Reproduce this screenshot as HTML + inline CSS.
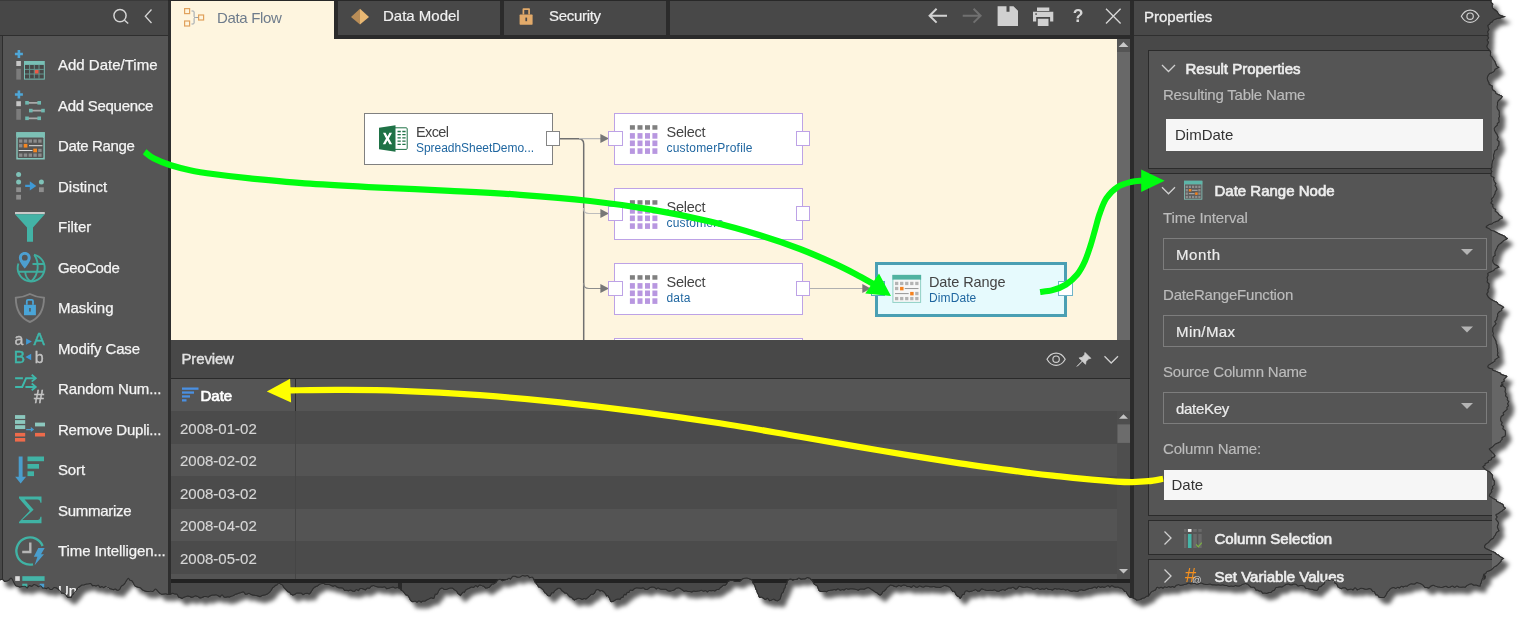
<!DOCTYPE html>
<html lang="en"><head><meta charset="utf-8"><title>Data Flow - Date Range</title>
<style>
html,body{margin:0;padding:0;background:#fff;}
body{width:1530px;height:623px;overflow:hidden;font-family:"Liberation Sans",sans-serif;font-size:15px;color:#e6e6e6;}
#shadow{position:absolute;left:0;top:0;width:1530px;height:623px;filter:drop-shadow(5px 6px 2.1px rgba(0,0,0,.63));}
#app{position:absolute;left:0;top:0;width:1530px;height:623px;background:#2e2e2e;overflow:hidden;}
.abs{position:absolute;}
.t{position:absolute;white-space:nowrap;line-height:20px;height:20px;}
svg{position:absolute;overflow:visible;}
/* left panel */
#lp-head{left:0;top:0;width:168px;height:34.800px;background:#474747;}
#lp-body{left:3px;top:36px;width:165px;height:600px;background:#555;}
#lp-edge{left:0;top:36px;width:1.6px;height:600px;background:#484848;}
.li{left:58px;color:#f4f4f4;-webkit-text-stroke:0.25px #f4f4f4;}
/* center */
#tabbar{left:171px;top:0;width:959px;height:39px;background:#2b2b2b;}
.tab{top:1px;height:34px;background:#484848;}
#canvas{left:171px;top:39px;width:946px;height:301px;background:#fef5df;overflow:hidden;}
#cscroll{left:1117px;top:39px;width:13px;height:301px;background:#555;}
.node{position:absolute;background:#fff;border:1.4px solid #bda2e6;box-sizing:border-box;}
.port{position:absolute;width:14.6px;height:14.6px;background:#fff;border:1.4px solid #bda2e6;box-sizing:border-box;}
.nt{color:#444;font-size:14.5px;}
.ns{color:#1f66a0;font-size:12px;}
/* preview */
#pv-head{left:171px;top:340px;width:959px;height:38px;background:#484848;}
#pv-th{left:171px;top:379px;width:959px;height:32px;background:#555;}
.row{left:171px;width:946px;}
/* props */
#pp{left:1134px;top:0;width:400px;height:623px;background:#484848;}
#pp-head{left:1134px;top:0;width:400px;height:35px;background:#484848;}
.sec{position:absolute;left:1148px;width:344px;background:#555;border:1px solid #2b2b2b;border-right:none;box-sizing:border-box;}
.lbl{color:#bcbcbc;left:1163px;-webkit-text-stroke:0.15px #bcbcbc;}
.sh{color:#ededed;font-weight:400;-webkit-text-stroke:0.65px #ededed;}
.inp{position:absolute;background:#f6f6f6;box-sizing:border-box;}
.dd{position:absolute;border:1px solid #7d7d7d;box-sizing:border-box;}
.ddt{color:#ececec;left:1176px;-webkit-text-stroke:0.2px #ececec;}

</style></head>
<body>
<div id="shadow"><div id="app" style="clip-path:path('M-20.0,-20.0 L-20.0,580.2 L0.0,580.2 L2.3,579.7 L4.5,582.0 L6.8,581.6 L8.9,580.7 L11.0,578.5 L12.1,579.8 L13.2,582.3 L14.2,584.1 L15.3,586.1 L17.6,586.8 L19.8,587.4 L22.1,587.0 L24.6,586.7 L27.2,588.4 L29.5,586.0 L31.7,586.9 L34.0,585.0 L36.1,585.6 L38.2,587.3 L40.4,586.3 L42.5,588.4 L44.4,588.4 L46.3,589.2 L48.2,588.1 L50.1,590.1 L52.0,590.1 L54.0,588.1 L55.9,588.2 L57.8,589.5 L59.5,591.1 L61.2,593.5 L62.9,593.5 L64.6,594.5 L66.3,596.4 L68.0,598.0 L71.4,598.0 L72.6,595.3 L73.8,594.2 L75.0,593.1 L76.2,591.7 L77.4,589.5 L78.7,587.9 L79.9,587.0 L82.1,585.4 L84.4,585.2 L86.7,584.4 L88.6,584.2 L90.5,583.9 L92.4,586.2 L94.3,585.9 L96.2,586.4 L98.1,585.6 L100.0,587.9 L102.0,587.0 L103.8,588.3 L105.7,586.8 L107.6,587.7 L109.5,589.1 L111.4,589.4 L113.3,590.3 L115.2,589.4 L117.1,590.8 L118.9,590.4 L120.3,589.2 L121.6,586.6 L123.0,585.7 L124.3,584.7 L125.6,583.0 L127.0,580.5 L128.3,578.8 L129.8,580.7 L131.4,580.9 L132.9,583.1 L134.4,586.1 L135.9,587.0 L138.1,587.8 L140.2,588.3 L142.3,590.3 L144.4,591.2 L146.6,592.0 L148.7,592.1 L150.8,591.6 L152.9,592.1 L155.5,589.5 L156.9,590.8 L158.3,592.4 L159.7,593.8 L161.8,594.8 L163.8,594.4 L165.8,594.3 L167.9,594.9 L169.9,595.1 L172.5,593.7 L175.0,594.6 L176.7,594.6 L178.4,597.4 L180.1,598.0 L182.0,599.0 L183.9,597.8 L185.9,597.1 L187.8,596.4 L189.7,597.0 L191.6,598.0 L193.5,597.2 L195.4,596.3 L197.7,597.0 L199.9,598.4 L202.2,598.0 L204.2,596.9 L206.3,597.1 L208.3,597.6 L210.4,596.2 L212.4,595.5 L214.3,595.6 L216.2,595.3 L218.1,596.2 L220.1,597.5 L222.0,595.3 L223.9,597.5 L225.8,597.8 L227.7,597.2 L229.6,597.5 L231.6,596.6 L233.5,596.1 L235.5,594.8 L237.4,594.3 L239.3,593.4 L241.3,592.9 L243.2,592.2 L245.2,594.7 L247.1,594.4 L249.1,593.8 L251.0,595.0 L252.9,595.4 L254.9,595.8 L257.4,596.2 L260.0,597.2 L262.1,596.0 L264.2,595.6 L266.4,594.9 L268.5,593.8 L270.0,592.6 L271.4,590.8 L272.9,588.2 L274.3,587.3 L275.8,585.7 L277.2,585.3 L278.7,583.6 L282.1,585.3 L283.5,587.8 L284.9,589.2 L286.3,590.7 L287.8,592.3 L289.2,592.5 L290.6,594.6 L292.7,595.5 L294.7,595.1 L296.8,593.6 L298.9,593.4 L301.0,593.4 L303.0,595.3 L305.1,594.0 L307.2,593.7 L309.3,594.6 L310.6,593.4 L312.0,591.2 L313.4,589.0 L314.7,587.7 L316.1,587.0 L318.0,586.3 L319.9,584.6 L321.8,584.1 L323.7,583.9 L325.6,585.0 L327.5,584.9 L329.3,585.1 L331.2,586.0 L333.1,586.7 L335.0,586.0 L336.9,587.5 L338.8,588.2 L340.7,588.2 L342.6,588.5 L344.5,591.1 L346.4,590.7 L348.4,591.2 L350.4,590.5 L352.4,591.5 L354.5,592.0 L356.5,590.0 L358.6,591.2 L360.3,588.9 L362.0,589.0 L365.4,590.4 L367.5,588.4 L369.6,588.8 L371.7,586.4 L373.8,586.1 L376.0,587.1 L378.1,587.4 L380.2,587.5 L382.3,587.8 L384.5,587.2 L386.6,589.2 L388.7,588.8 L390.8,588.1 L393.0,587.5 L395.1,588.6 L397.2,588.0 L399.3,588.4 L401.0,590.4 L402.7,591.5 L404.4,593.8 L405.9,595.5 L407.3,595.5 L408.7,597.5 L410.1,600.6 L411.5,601.8 L412.9,602.3 L415.0,601.6 L417.0,602.8 L419.0,601.3 L421.1,602.7 L423.1,601.4 L425.2,601.5 L427.2,600.2 L429.2,599.3 L431.3,598.2 L433.3,598.9 L434.5,598.3 L435.6,594.6 L436.7,595.0 L437.9,593.8 L439.0,591.3 L440.1,589.5 L442.1,588.5 L444.1,590.1 L446.1,590.1 L448.0,589.3 L450.0,588.6 L452.0,588.4 L453.4,589.4 L454.8,590.6 L456.3,591.6 L457.7,594.1 L459.1,594.8 L460.5,596.3 L461.9,594.2 L463.2,592.6 L464.6,592.7 L465.9,590.4 L467.3,589.5 L469.4,588.7 L471.6,587.4 L473.7,587.9 L475.8,586.1 L477.7,587.4 L479.7,585.4 L481.6,586.1 L483.6,586.7 L485.5,588.6 L487.5,588.3 L489.4,587.8 L490.8,586.2 L492.2,584.6 L493.6,584.5 L495.1,583.6 L496.5,582.6 L497.9,580.2 L500.2,579.8 L502.4,581.2 L504.7,580.2 L506.7,580.0 L508.8,578.8 L510.8,579.4 L512.8,576.8 L514.9,576.8 L517.4,577.8 L520.0,577.6 L522.5,576.0 L525.1,576.5 L527.4,576.0 L529.6,578.3 L531.9,577.6 L533.2,578.8 L534.4,582.1 L535.7,583.6 L537.0,585.3 L538.5,587.5 L540.0,587.7 L541.5,589.0 L542.9,590.3 L544.4,593.1 L545.9,593.8 L547.4,596.1 L548.9,596.3 L550.5,596.2 L552.0,593.2 L553.6,593.2 L555.2,591.0 L556.8,589.7 L558.4,588.7 L559.9,588.7 L561.5,590.9 L563.1,592.1 L564.7,593.5 L566.4,593.6 L568.0,595.6 L569.6,597.3 L571.2,597.6 L572.8,599.4 L574.4,600.6 L576.3,599.5 L578.3,598.8 L580.2,598.9 L582.1,600.1 L584.1,598.9 L586.0,599.5 L588.0,598.0 L589.7,596.6 L591.4,594.8 L593.1,594.8 L594.8,593.5 L596.5,590.2 L598.2,590.1 L599.9,591.4 L601.6,590.9 L603.3,591.9 L605.0,593.8 L606.3,596.5 L607.7,596.0 L609.0,598.2 L610.4,601.8 L611.8,602.3 L613.9,601.5 L616.0,600.0 L618.1,599.5 L620.3,599.7 L621.7,597.8 L623.2,597.7 L624.6,594.7 L626.1,595.4 L627.5,592.8 L629.0,592.9 L630.5,590.4 L632.6,590.9 L634.7,588.9 L636.8,588.2 L638.9,588.4 L641.1,588.7 L643.2,588.2 L645.3,590.0 L647.4,590.1 L649.7,588.2 L652.0,587.4 L654.2,587.8 L656.2,589.5 L658.1,588.3 L660.1,589.5 L662.0,589.7 L663.9,589.8 L665.9,589.7 L667.8,591.2 L670.0,591.6 L672.1,591.1 L674.2,590.5 L676.3,588.7 L678.3,588.2 L680.2,589.0 L682.2,590.4 L684.1,591.8 L686.0,591.2 L688.0,592.1 L689.9,592.1 L691.9,592.4 L693.8,591.4 L695.7,592.0 L697.7,591.4 L699.6,591.2 L701.6,590.8 L703.5,591.8 L705.4,591.0 L707.3,592.5 L709.3,591.0 L711.2,591.3 L713.1,591.0 L715.0,591.6 L716.9,590.0 L718.8,590.1 L720.4,588.3 L722.0,587.0 L723.5,585.7 L725.1,585.8 L726.7,584.6 L728.3,581.8 L729.9,581.0 L732.2,580.8 L734.5,581.6 L736.9,581.9 L739.2,581.9 L740.9,580.9 L742.6,579.3 L744.7,578.8 L746.8,578.4 L749.0,579.1 L751.1,579.9 L751.9,580.6 L752.8,583.6 L753.6,584.2 L754.5,586.1 L755.3,589.3 L756.2,590.2 L757.0,593.3 L757.9,594.4 L758.7,597.1 L759.6,598.0 L761.6,597.6 L763.6,598.9 L765.5,600.0 L767.5,598.7 L769.5,601.3 L771.5,600.6 L773.6,599.6 L775.7,600.9 L777.9,601.2 L780.0,599.7 L780.8,598.8 L781.5,595.7 L782.3,593.4 L783.1,592.7 L783.9,591.9 L784.6,588.6 L785.4,588.3 L786.2,584.6 L787.0,584.8 L787.7,580.8 L788.5,580.2 L790.5,579.4 L792.6,580.5 L794.6,579.9 L796.7,579.9 L798.7,578.5 L800.9,579.4 L803.1,579.2 L805.3,579.2 L807.5,578.0 L809.7,578.8 L811.0,580.1 L812.2,580.9 L813.4,583.8 L814.6,585.1 L815.9,585.6 L817.1,586.6 L818.3,590.3 L819.6,591.4 L820.8,592.1 L822.7,592.0 L824.6,591.8 L826.5,592.3 L828.4,591.1 L830.3,590.8 L832.3,590.4 L834.2,590.0 L836.1,590.4 L838.1,589.2 L840.2,590.7 L842.2,590.1 L844.2,590.4 L846.3,589.1 L848.3,589.8 L850.3,589.2 L852.4,589.2 L854.4,589.5 L856.5,590.1 L858.4,590.7 L860.3,589.5 L862.3,589.4 L864.2,589.7 L866.2,588.7 L868.1,587.9 L870.1,589.0 L871.8,590.2 L873.5,591.2 L875.2,592.6 L876.9,593.2 L878.6,594.9 L880.3,595.5 L881.7,594.7 L883.2,592.0 L884.6,591.3 L886.1,589.8 L887.5,587.8 L889.0,586.8 L890.5,585.6 L892.6,586.0 L894.7,587.0 L896.8,587.2 L898.9,585.8 L901.1,586.8 L903.2,585.5 L905.3,585.8 L907.4,587.0 L909.5,587.0 L911.5,587.9 L913.6,586.0 L915.6,587.5 L917.6,587.8 L919.7,586.3 L921.7,587.2 L923.8,587.6 L925.8,586.4 L927.8,586.7 L929.9,587.2 L931.9,587.3 L934.0,587.0 L936.0,587.7 L938.0,587.8 L940.1,588.0 L942.1,587.1 L944.1,586.1 L946.2,586.3 L948.2,587.0 L949.7,587.8 L951.2,590.1 L952.7,592.1 L954.2,591.8 L955.7,594.9 L957.1,596.5 L958.6,597.0 L960.1,598.9 L961.5,597.4 L962.8,595.0 L964.2,594.9 L965.6,591.6 L966.9,591.2 L969.0,592.3 L971.2,591.7 L973.3,591.1 L975.4,590.1 L977.5,591.5 L979.7,591.5 L981.8,589.3 L983.9,590.1 L986.0,590.8 L988.2,591.1 L990.3,590.7 L992.4,590.9 L994.5,590.3 L996.7,591.6 L998.8,591.8 L1000.9,590.7 L1002.9,590.1 L1005.0,590.8 L1007.0,589.5 L1009.1,588.5 L1011.1,588.6 L1013.1,587.8 L1015.2,589.4 L1017.2,589.2 L1019.3,586.7 L1021.3,587.3 L1023.2,587.9 L1025.2,587.7 L1027.1,587.3 L1029.1,588.1 L1031.0,588.3 L1032.9,589.8 L1034.9,589.5 L1037.4,588.6 L1040.0,590.1 L1042.1,589.2 L1044.2,589.8 L1046.4,588.7 L1048.5,590.1 L1050.6,590.0 L1052.7,590.5 L1054.9,588.9 L1057.0,589.5 L1059.1,589.2 L1061.2,590.1 L1063.4,589.6 L1065.5,590.6 L1067.6,590.0 L1069.7,591.3 L1071.9,591.8 L1074.0,591.2 L1075.9,591.8 L1077.8,591.9 L1079.6,590.6 L1081.5,590.2 L1083.4,590.9 L1085.3,590.4 L1087.2,589.7 L1089.1,589.0 L1091.0,589.0 L1092.9,588.2 L1094.8,587.4 L1096.6,588.8 L1098.5,586.8 L1100.4,588.0 L1102.3,587.2 L1104.2,587.9 L1106.1,587.1 L1108.0,586.1 L1109.9,587.7 L1111.9,586.0 L1113.8,587.2 L1115.7,587.8 L1117.7,587.5 L1119.6,588.3 L1121.6,588.7 L1123.0,589.9 L1124.4,591.9 L1125.8,592.1 L1127.2,594.8 L1128.6,596.4 L1130.1,598.0 L1132.2,598.1 L1134.3,598.9 L1136.4,600.4 L1138.6,600.2 L1140.6,599.9 L1142.6,598.7 L1144.7,598.3 L1146.7,596.8 L1148.8,596.3 L1150.2,594.2 L1151.6,592.3 L1153.0,591.5 L1154.4,590.9 L1155.8,590.2 L1157.2,587.8 L1159.2,588.6 L1161.1,587.7 L1163.0,588.7 L1164.9,587.3 L1166.8,588.1 L1168.7,587.0 L1170.6,587.7 L1172.5,587.0 L1174.5,587.9 L1176.5,585.8 L1178.5,585.1 L1180.5,585.9 L1182.5,585.4 L1184.4,585.0 L1186.6,584.4 L1188.7,583.4 L1190.8,584.2 L1192.9,584.1 L1195.1,583.9 L1197.2,584.8 L1199.3,584.0 L1201.4,583.6 L1203.6,584.4 L1205.7,585.0 L1207.8,584.9 L1209.9,584.4 L1212.0,585.3 L1214.2,585.2 L1216.3,585.5 L1218.4,585.3 L1220.5,585.7 L1222.7,585.3 L1224.8,585.9 L1226.9,586.1 L1229.0,586.9 L1231.2,586.6 L1233.3,586.9 L1235.4,586.1 L1237.4,586.5 L1239.4,586.4 L1241.4,585.6 L1243.3,584.6 L1245.3,584.1 L1247.3,584.4 L1249.0,586.0 L1250.7,587.5 L1252.4,587.7 L1254.1,587.7 L1255.8,590.5 L1257.5,590.6 L1259.2,591.6 L1260.9,591.6 L1262.6,593.8 L1264.7,593.6 L1266.8,594.0 L1269.0,593.0 L1271.1,592.9 L1272.8,591.3 L1274.5,590.8 L1276.2,587.9 L1277.9,587.8 L1279.9,587.2 L1282.0,587.6 L1284.0,586.3 L1286.0,584.9 L1288.1,584.4 L1290.1,585.2 L1292.1,585.2 L1294.0,584.4 L1296.0,584.7 L1298.0,586.6 L1300.0,585.9 L1301.9,586.0 L1303.8,586.3 L1305.6,588.9 L1307.5,588.9 L1309.8,589.5 L1312.0,589.7 L1314.3,590.6 L1316.5,591.1 L1318.0,590.2 L1319.5,587.3 L1321.0,587.0 L1322.5,585.6 L1324.1,584.4 L1325.6,581.5 L1327.1,580.6 L1329.7,580.9 L1332.3,580.6 L1333.7,581.4 L1335.0,583.7 L1336.4,584.3 L1337.7,587.3 L1339.1,588.1 L1341.1,589.3 L1343.1,588.2 L1345.1,588.2 L1347.1,590.3 L1349.1,589.9 L1351.1,589.6 L1353.1,590.4 L1355.1,588.3 L1357.1,590.4 L1359.1,589.6 L1361.1,588.7 L1363.1,588.9 L1365.1,589.7 L1367.1,589.7 L1369.2,588.9 L1370.8,589.4 L1372.4,591.7 L1374.0,591.9 L1375.6,595.2 L1377.2,595.2 L1378.8,597.6 L1380.4,597.9 L1384.2,597.9 L1385.4,596.8 L1386.6,594.8 L1387.8,592.3 L1389.0,591.3 L1390.2,589.6 L1392.1,588.3 L1394.0,588.0 L1395.8,589.0 L1397.7,587.8 L1399.6,588.4 L1401.5,586.7 L1403.4,587.5 L1405.2,586.6 L1407.2,586.7 L1409.1,585.3 L1411.0,584.3 L1413.0,584.6 L1414.9,584.4 L1416.8,583.0 L1418.8,583.6 L1420.8,584.3 L1422.8,585.5 L1424.8,588.1 L1426.9,588.0 L1429.0,588.5 L1431.1,586.5 L1433.2,585.7 L1435.3,586.6 L1437.4,587.2 L1439.6,587.6 L1441.7,588.1 L1443.9,587.3 L1446.0,586.7 L1448.2,588.1 L1450.3,587.4 L1452.5,586.5 L1454.6,588.0 L1456.8,586.5 L1458.9,587.4 L1461.1,587.7 L1463.2,587.4 L1465.4,587.8 L1467.4,585.8 L1469.4,584.8 L1471.4,584.3 L1473.6,585.7 L1475.9,585.4 L1478.1,586.2 L1480.4,586.6 L1481.0,583.9 L1481.6,583.1 L1482.3,580.2 L1482.9,578.8 L1483.5,577.6 L1484.2,574.6 L1483.4,580.3 L1485.4,578.5 L1486.1,576.6 L1484.7,574.8 L1486.6,572.9 L1487.2,571.9 L1490.7,570.8 L1492.0,569.7 L1493.5,568.6 L1494.2,567.6 L1496.3,566.5 L1498.1,564.9 L1499.8,563.3 L1501.3,561.7 L1501.8,560.1 L1504.3,558.5 L1502.1,557.3 L1500.0,556.0 L1498.8,554.8 L1496.3,553.6 L1495.6,552.6 L1493.6,551.5 L1490.8,550.4 L1488.6,549.3 L1486.3,548.3 L1485.0,547.2 L1485.2,545.7 L1486.5,544.3 L1488.9,542.8 L1489.8,541.4 L1491.3,539.9 L1493.9,538.4 L1494.3,537.0 L1495.7,535.5 L1496.2,534.0 L1497.0,532.6 L1499.5,531.1 L1498.6,529.1 L1497.8,527.1 L1498.3,525.1 L1499.1,523.1 L1497.9,521.1 L1496.3,519.1 L1497.7,517.1 L1496.3,515.0 L1498.6,513.9 L1500.1,512.7 L1502.1,511.5 L1503.4,510.3 L1505.0,509.2 L1505.9,508.0 L1503.9,506.5 L1503.9,505.1 L1502.2,503.6 L1499.5,502.2 L1497.0,501.1 L1496.9,500.0 L1495.2,499.0 L1493.0,497.9 L1491.5,496.8 L1489.8,495.8 L1490.5,493.9 L1492.3,492.1 L1491.9,490.2 L1493.4,488.4 L1492.9,486.6 L1494.9,484.7 L1494.7,482.9 L1495.0,481.0 L1493.3,479.0 L1492.9,477.1 L1493.1,475.2 L1491.4,473.2 L1490.4,472.0 L1488.2,470.7 L1485.9,469.4 L1484.6,468.1 L1483.4,466.8 L1485.4,465.4 L1485.5,464.0 L1488.9,462.6 L1488.8,461.2 L1491.9,459.8 L1491.9,458.4 L1495.0,457.0 L1495.3,455.6 L1494.5,454.0 L1492.6,452.3 L1491.3,450.7 L1489.8,449.1 L1491.8,448.0 L1493.3,446.8 L1494.2,445.7 L1495.5,444.5 L1497.9,443.4 L1500.6,442.2 L1501.1,441.1 L1502.6,439.5 L1502.4,437.9 L1505.5,436.3 L1505.9,434.7 L1505.9,432.7 L1505.7,430.6 L1503.3,428.6 L1504.1,426.6 L1501.8,424.6 L1502.7,422.6 L1501.1,420.6 L1501.1,418.6 L1501.6,416.7 L1504.3,414.9 L1503.6,413.1 L1505.7,411.2 L1507.7,409.4 L1507.3,407.6 L1509.1,405.7 L1508.0,403.7 L1509.3,401.7 L1507.7,399.7 L1508.1,397.7 L1506.0,395.7 L1506.4,393.7 L1505.5,391.7 L1505.9,389.6 L1505.5,387.5 L1503.2,385.4 L1503.3,383.2 L1501.1,386.1 L1503.3,384.5 L1502.1,382.9 L1504.9,381.3 L1504.2,379.7 L1505.8,378.1 L1507.5,376.5 L1506.4,375.5 L1502.8,374.6 L1500.9,373.6 L1500.3,372.6 L1497.9,371.7 L1495.7,370.7 L1492.9,369.7 L1493.3,368.8 L1489.3,367.8 L1488.2,366.8 L1488.7,365.5 L1491.1,364.1 L1493.3,362.7 L1495.3,361.3 L1495.3,360.0 L1497.5,358.6 L1499.5,357.2 L1497.8,355.1 L1498.3,352.9 L1497.9,350.8 L1498.1,348.8 L1497.5,346.9 L1497.4,345.0 L1496.6,343.1 L1496.4,341.1 L1495.5,339.2 L1494.4,337.3 L1493.3,335.3 L1493.9,333.4 L1493.1,331.5 L1493.2,329.5 L1493.3,327.6 L1494.9,325.7 L1496.6,323.8 L1495.3,321.8 L1497.1,319.9 L1497.3,318.0 L1498.2,316.0 L1498.0,314.1 L1499.5,312.2 L1502.2,310.6 L1502.1,309.0 L1504.3,307.4 L1503.0,306.2 L1500.9,305.0 L1498.3,303.7 L1497.9,302.5 L1496.4,301.5 L1493.8,300.4 L1491.9,299.3 L1490.3,298.3 L1489.0,297.2 L1488.2,296.1 L1487.2,294.1 L1488.6,292.0 L1488.3,290.0 L1489.4,287.9 L1489.3,285.9 L1489.5,283.8 L1487.6,281.8 L1488.1,279.7 L1487.6,277.7 L1488.5,275.6 L1488.2,273.6 L1490.4,272.5 L1492.7,271.5 L1494.4,270.4 L1495.1,269.3 L1497.4,268.2 L1499.5,267.2 L1497.9,265.6 L1495.0,264.0 L1493.5,262.3 L1493.1,260.7 L1493.5,259.0 L1493.5,257.2 L1495.8,255.4 L1495.3,253.6 L1495.6,251.8 L1496.5,250.0 L1497.4,248.2 L1498.1,246.4 L1499.5,244.7 L1501.3,243.4 L1502.9,242.1 L1504.2,240.8 L1506.8,239.5 L1508.2,238.2 L1505.7,237.3 L1505.8,236.4 L1504.2,235.5 L1501.9,234.6 L1499.5,233.6 L1498.0,232.7 L1496.3,231.8 L1494.5,230.8 L1491.3,229.9 L1490.3,228.9 L1488.6,227.9 L1486.6,227.0 L1487.6,226.0 L1489.2,225.0 L1492.7,224.1 L1493.4,223.1 L1495.6,222.2 L1498.4,221.2 L1499.4,220.2 L1500.4,219.3 L1502.7,218.3 L1502.3,216.4 L1499.2,214.4 L1497.9,212.5 L1495.6,210.9 L1496.2,209.3 L1493.7,207.7 L1493.1,206.1 L1493.4,204.5 L1491.4,202.9 L1492.7,201.0 L1491.9,199.2 L1493.8,197.3 L1494.5,195.5 L1495.5,193.7 L1495.7,191.8 L1497.2,190.0 L1497.1,187.8 L1495.5,185.5 L1496.3,183.3 L1494.8,181.4 L1494.0,179.4 L1494.5,177.5 L1491.4,175.6 L1491.4,173.6 L1492.4,171.5 L1491.2,169.3 L1492.4,167.2 L1492.2,165.1 L1492.7,162.9 L1493.1,160.8 L1494.3,158.8 L1494.1,156.9 L1494.0,155.0 L1494.7,153.1 L1495.2,151.1 L1497.8,149.2 L1497.9,147.3 L1499.3,145.3 L1499.3,143.4 L1499.5,141.5 L1497.6,139.6 L1498.5,137.8 L1498.1,136.0 L1497.3,134.1 L1496.0,132.3 L1495.0,130.5 L1494.7,128.6 L1495.8,127.0 L1497.8,125.4 L1497.7,123.8 L1499.5,122.2 L1499.4,120.3 L1499.1,118.3 L1500.1,116.4 L1499.6,114.5 L1499.8,112.5 L1499.4,110.6 L1497.9,108.7 L1497.5,106.8 L1498.0,104.8 L1497.9,102.9 L1498.5,101.3 L1500.1,99.7 L1501.9,98.1 L1502.7,96.5 L1501.6,95.4 L1498.6,94.3 L1496.3,93.2 L1495.9,91.4 L1493.0,89.6 L1492.5,87.7 L1492.9,85.9 L1489.6,84.1 L1489.2,82.2 L1488.2,80.4 L1487.7,78.2 L1488.3,76.1 L1489.8,74.0 L1492.4,72.9 L1494.3,71.8 L1495.0,70.7 L1495.3,69.7 L1497.4,68.6 L1499.5,67.5 L1497.2,65.9 L1496.3,64.3 L1495.8,62.5 L1494.9,60.7 L1493.4,58.9 L1492.8,57.2 L1490.8,55.4 L1491.0,53.6 L1491.1,51.8 L1489.8,50.0 L1488.2,48.2 L1487.2,46.2 L1488.3,44.1 L1488.8,42.1 L1487.6,40.0 L1489.2,38.0 L1488.1,36.0 L1488.7,33.9 L1488.0,31.9 L1489.5,29.8 L1488.9,27.8 L1488.2,25.7 L1490.0,24.4 L1490.6,23.2 L1492.9,21.9 L1493.5,20.6 L1496.3,19.3 L1498.4,18.8 L1501.1,18.3 L1501.3,17.7 L1504.0,17.2 L1505.9,16.7 L1503.7,16.0 L1501.4,15.2 L1499.5,14.5 L1498.4,12.9 L1497.4,11.3 L1495.2,9.6 L1493.1,8.0 L1492.6,6.0 L1493.4,4.0 L1491.4,2.0 L1491.4,0.0 L1491.4,-20.0 Z')">
<div class="abs" id="lp-head"></div>
<div class="abs" id="lp-edge"></div>
<div class="abs" id="lp-body"></div>
<svg id="lp-icons" width="168" height="623" style="left:0;top:0" viewBox="0 0 168 623">
  <!-- search + collapse -->
  <circle cx="120" cy="15.600" r="6.100" fill="none" stroke="#d4d4d4" stroke-width="1.500"/>
  <path d="M124.500 20.200 L128.200 23.500" stroke="#d4d4d4" stroke-width="1.500" fill="none"/>
  <path d="M151.5 9.5 L145.3 16.3 L151.5 23" stroke="#d4d4d4" stroke-width="1.3" fill="none"/>

  <!-- Add Date/Time -->
  <path d="M17.600 50 h2.600 v2.700 h2.700 v2.600 h-2.700 v2.700 h-2.600 v-2.700 h-2.700 v-2.600 h2.700z" fill="#4fa6d6"/>
  <rect x="16.3" y="61" width="4.6" height="5" fill="#c6c6c6"/>
  <rect x="16.3" y="68.8" width="4.6" height="10.8" fill="#7c7c7c"/>
  <rect x="24" y="61" width="20.800" height="18.600" fill="#78bfb5"/>
  <rect x="25" y="64.900" width="18.800" height="13.700" fill="#474747"/>
  <path d="M29.600 64.900v13.700 M34.300 64.900v13.700 M39 64.900v13.700 M25 69.400h18.800 M25 74h18.800" stroke="#64958e" stroke-width="1" fill="none"/>
  <rect x="34.900" y="70" width="3.600" height="3.500" fill="#ea5a47"/>

  <!-- Add Sequence -->
  <path d="M17.600 90.500 h2.600 v2.700 h2.700 v2.600 h-2.700 v2.700 h-2.600 v-2.700 h-2.700 v-2.600 h2.700z" fill="#4fa6d6"/>
  <rect x="16.3" y="101.2" width="4.6" height="5" fill="#c6c6c6"/>
  <rect x="16.3" y="109" width="4.6" height="10.8" fill="#7c7c7c"/>
  <path d="M27 102.800h12 M31 110.600h12 M27 118.300h12" stroke="#a9a9a9" stroke-width="1.700" fill="none"/>
  <g fill="#6fb8b0"><rect x="25.2" y="101" width="3.6" height="3.6"/><rect x="37.4" y="101" width="3.6" height="3.6"/>
  <rect x="29" y="108.8" width="3.6" height="3.6"/><rect x="41.2" y="108.8" width="3.6" height="3.6"/>
  <rect x="25.2" y="116.5" width="3.6" height="3.6"/><rect x="37.4" y="116.5" width="3.6" height="3.6"/></g>

  <!-- Date Range -->
  <rect x="16.3" y="132.2" width="28.500" height="27.300" fill="#86c5bb"/>
  <rect x="16.3" y="132.2" width="28.500" height="4.600" fill="#7cc0b5"/>
  <rect x="17.700" y="137.500" width="25.700" height="20.600" rx="0.800" fill="#555555"/>
  <g fill="#8b8b8b"><rect x="19.00" y="139.40" width="3.400" height="3.300"/><rect x="23.80" y="139.40" width="3.400" height="3.300"/><rect x="28.60" y="139.40" width="3.400" height="3.300"/><rect x="33.40" y="139.40" width="3.400" height="3.300"/><rect x="38.20" y="139.40" width="3.400" height="3.300"/><rect x="19.00" y="144.10" width="3.400" height="3.300"/><rect x="38.20" y="148.80" width="3.400" height="3.300"/><rect x="19.00" y="153.50" width="3.400" height="3.300"/><rect x="23.80" y="153.50" width="3.400" height="3.300"/><rect x="28.60" y="153.50" width="3.400" height="3.300"/><rect x="33.40" y="153.50" width="3.400" height="3.300"/><rect x="38.20" y="153.50" width="3.400" height="3.300"/></g>
  <rect x="23.70" y="143.90" width="3.700" height="3.700" fill="#f5861f"/><rect x="33.30" y="148.60" width="3.700" height="3.700" fill="#f5861f"/>
  <path d="M29 145.700H42.400 M18.700 150.500H32.500" stroke="#dedede" stroke-width="1"/>

  <!-- Distinct -->
  <g fill="#7fc2b8"><circle cx="18.600" cy="174.600" r="2.500"/><circle cx="18.600" cy="182.100" r="2.500"/><circle cx="41.400" cy="182.100" r="2.500"/></g>
  <g fill="#8e8e8e"><rect x="16.200" y="187.300" width="4.800" height="4.800"/><rect x="16.200" y="194.800" width="4.800" height="4.800"/><rect x="39" y="187.300" width="4.800" height="4.800"/></g>
  <path d="M25.200 185.900h7" stroke="#3f9ad6" stroke-width="2.400" fill="none"/>
  <path d="M29.800 181.300 L36.300 185.900 L29.800 190.500z" fill="#3f9ad6"/>

  <!-- Filter -->
  <rect x="15" y="212" width="29.8" height="2.2" fill="#c9c9c9"/>
  <path d="M15 214.2 H44.8 L33 227.5 V241.8 H27 V227.5z" fill="#43b3a6"/>

  <!-- GeoCode -->
  <g fill="none" stroke="#3fae9f" stroke-width="1.9">
    <path d="M34 254.700 A13.500 13.500 0 1 1 18.400 263.500"/>
    <path d="M34.300 255 C39.300 262 39.300 274 31.200 281.400 M25.200 272 C25.500 277 28 280 31.200 281.400 M32.500 264 H44 M18.500 271.800 H44.300"/>
  </g>
  <path d="M24.800 251.900 c-3.400 0 -5.900 2.600 -5.900 5.900 c0 4.200 5.900 10.800 5.900 10.800 s5.900 -6.600 5.900 -10.800 c0 -3.300 -2.500 -5.900 -5.900 -5.900z M24.800 254.800 a2.900 2.900 0 1 1 0 5.800 a2.900 2.900 0 1 1 0 -5.800z" fill="#4d9fd0" fill-rule="evenodd"/>

  <!-- Masking -->
  <path d="M29.9 294 C25 296.5 20 297.6 15.8 297.8 C15.8 309 19 317.5 29.9 322 C40.800 317.500 44 309 44 297.800 C39.800 297.600 34.800 296.500 29.900 294z" fill="none" stroke="#828282" stroke-width="1.9"/>
  <rect x="24" y="304.8" width="11.9" height="10.4" fill="#4aa5d8"/>
  <path d="M26.800 304.800 v-3.700 q0 -1.200 1.200 -1.200 h3.800 q1.200 0 1.200 1.200 v3.700" fill="none" stroke="#4aa5d8" stroke-width="1.800"/>
  <rect x="29.2" y="308" width="1.5" height="3.6" fill="#555"/>

  <!-- Modify Case -->
  <g font-family="Liberation Sans, sans-serif">
  <text x="14.600" y="345.300" font-size="16" fill="#c2c2c2" stroke="#c2c2c2" stroke-width="0.300">a</text>
  <text x="33.400" y="345.400" font-size="17" fill="#3fb8ab" stroke="#3fb8ab" stroke-width="0.450">A</text>
  <text x="13.700" y="362.800" font-size="17" fill="#3fb8ab" stroke="#3fb8ab" stroke-width="0.450">B</text>
  <text x="34.700" y="362.800" font-size="16" fill="#c2c2c2" stroke="#c2c2c2" stroke-width="0.300">b</text>
  </g>
  <path d="M26.100 338.400 L31.900 341.600 L26.100 344.800z M31.200 353.800 L25.400 357 L31.200 360.200z" fill="#3f9ad6"/>

  <!-- Random Number -->
  <g fill="none" stroke="#3fb8ab" stroke-width="2">
    <path d="M15.100 378.200 H22.900 M15.100 386.900 H22.200 L26.100 378.200 H35.200 M25.400 386.900 H35.200"/>
    <path d="M31.700 374.800 L35.800 378.200 L31.700 381.600 M31.700 383.500 L35.800 386.900 L31.700 390.300" stroke-width="1.800"/>
  </g>
  <text x="33.900" y="403.200" font-family="Liberation Sans, sans-serif" font-size="18" fill="#c6c6c6" stroke="#c6c6c6" stroke-width="0.500">#</text>

  <!-- Remove Duplicates -->
  <g fill="#8cc8be"><rect x="15" y="415.100" width="10.200" height="3.800"/><rect x="15" y="420.100" width="10.200" height="3.800"/><rect x="15" y="425.200" width="10.200" height="3.800"/><rect x="35" y="422.600" width="10" height="3.800"/></g>
  <g fill="#ee6b4b"><rect x="15" y="432.900" width="10.200" height="3.600"/><rect x="15" y="438" width="10.200" height="3.600"/><rect x="35" y="432.900" width="10" height="3.600"/></g>
  <path d="M26.200 429.600h6" stroke="#4a9dd0" stroke-width="1.100" fill="none"/>
  <path d="M30.800 427.100 L34.200 429.600 L30.800 432.100z" fill="#4a9dd0"/>

  <!-- Sort -->
  <path d="M18.700 456.400 h3.900 v20.400 h3.500 l-5.450 6.800 l-5.450 -6.800 h3.500z" fill="#4a9dcc"/>
  <g fill="#40b3a5"><rect x="27.500" y="456.500" width="16.500" height="4.700"/><rect x="27.500" y="464" width="11.500" height="4.700"/><rect x="27.500" y="471.300" width="6.500" height="4.800"/></g>

  <!-- Summarize -->
  <path d="M19 496.400 H41.500 V502.800 H40.400 Q40 499.600 37.500 499.600 H24.600 L33.600 509.800 L22.200 520.100 H37.500 Q40 520.100 40.400 516.800 H41.500 V523.300 H19 V521.900 L29.800 510.800 L19 498.200 Z" fill="#40b3a5"/>

  <!-- Time Intelligence -->
  <path d="M42.600 546 A13.600 13.600 0 1 0 33 564.300" fill="none" stroke="#40b3a5" stroke-width="2.400"/>
  <path d="M30.300 542.600 V552 H22.200" fill="none" stroke="#b6b6b6" stroke-width="2.400"/>
  <path d="M38.300 548 H44.700 L41 554.300 H44 L34.600 565.300 L37.400 556.800 H33.800z" fill="#4a9dcc"/>

  <!-- Unpivot -->
  <rect x="15.200" y="576.200" width="4.600" height="4.700" fill="#dcdcdc"/>
  <rect x="22.300" y="576.200" width="22.300" height="4.700" fill="#45b5a8"/>
  <rect x="22.300" y="583.700" width="5" height="4.500" fill="#45b5a8"/>
  <rect x="39.700" y="583.700" width="4.500" height="4.500" fill="#4b9fd0"/>
</svg>
<div class="t li" style="top:54.5px">Add Date/Time</div>
<div class="t li" style="top:95.500px;letter-spacing:-0.28px">Add Sequence</div>
<div class="t li" style="top:135.500px;letter-spacing:-0.36px">Date Range</div>
<div class="t li" style="top:176.500px">Distinct</div>
<div class="t li" style="top:216.500px">Filter</div>
<div class="t li" style="top:257.500px;letter-spacing:-0.39px">GeoCode</div>
<div class="t li" style="top:297.500px;letter-spacing:-0.06px">Masking</div>
<div class="t li" style="top:338.500px;letter-spacing:-0.13px">Modify Case</div>
<div class="t li" style="top:378.500px;letter-spacing:-0.13px">Random Num...</div>
<div class="t li" style="top:419.500px;letter-spacing:-0.24px">Remove Dupli...</div>
<div class="t li" style="top:459.500px;letter-spacing:-0.15px">Sort</div>
<div class="t li" style="top:500.500px;letter-spacing:-0.28px">Summarize</div>
<div class="t li" style="top:540.500px;letter-spacing:-0.1px">Time Intelligen...</div>
<div class="t li" style="top:580.500px">Unpivot</div>

<div class="abs" id="tabbar"></div>
<div class="abs" style="left:171px;top:0;width:163px;height:39px;background:#fef5df"></div>
<div class="abs tab" style="left:338px;width:162px"></div>
<div class="abs tab" style="left:504px;width:162px"></div>
<div class="abs tab" style="left:670px;width:460px"></div>
<svg width="959" height="39" style="left:171px;top:0" viewBox="171 0 959 39">
  <!-- data flow icon -->
  <g fill="none" stroke="#e0a15c" stroke-width="1.2">
    <rect x="184.600" y="8.600" width="5" height="5"/><rect x="184.600" y="21" width="5" height="5"/><rect x="198.600" y="15" width="5" height="5"/>
  </g>
  <path d="M191.500 11 h1.600 q1 0 1 1 v4.500 q0 1 1.200 1 q-1.200 0 -1.200 1 v4.500 q0 1 -1 1 h-1.600" fill="none" stroke="#9aa3ad" stroke-width="1"/>
  <path d="M195.300 17.500h3" stroke="#9aa3ad" stroke-width="1"/>
  <!-- data model icon -->
  <path d="M360 8.800 L351 17 L360 24.600z" fill="#b98d57"/>
  <path d="M360 8.800 L369 17 L360 24.600z" fill="#e9b873"/>
  <!-- security icon -->
  <rect x="519.600" y="14.600" width="13" height="10.100" rx="0.600" fill="#e2aa6a"/>
  <path d="M523.400 14.600 v-5.500 h5.700 v5.500" fill="none" stroke="#e2aa6a" stroke-width="1.700" stroke-linejoin="round"/>
  <rect x="525.400" y="17.600" width="1.700" height="3.600" fill="#484848"/>
  <!-- toolbar -->
  <g fill="none" stroke="#d2d2d2" stroke-width="2">
    <path d="M929.500 15.700 H947 M936.600 8.800 L929.600 15.700 L936.600 22.600"/>
  </g>
  <g fill="none" stroke="#707070" stroke-width="2">
    <path d="M962.700 15.700 H980.200 M973.600 8.800 L980.600 15.700 L973.600 22.600"/>
  </g>
  <path d="M997.600 6.300 H1013.500 L1018 10.800 V25.900 H997.600z M1006.500 6.300 v5.400 h3 v-5.400z" fill="#d0d0d0" fill-rule="evenodd"/>
  <path d="M1037 7.500 h12.300 v3.500 h-12.300z M1033 11.800 h20.300 v9.600 h-3.200 v-4.300 h-13.900 v4.300 h-3.200z M1037.800 18.800 h10.700 v7.100 h-10.700z" fill="#d0d0d0"/>
  <rect x="1035.200" y="13.400" width="1.800" height="1.300" fill="#484848"/>
  <text x="1072.800" y="21.700" font-family="Liberation Sans, sans-serif" font-size="17.500" font-weight="700" fill="#d6d6d6">?</text>
  <path d="M1106 8.800 L1120.600 23.500 M1120.600 8.800 L1106 23.500" stroke="#d6d6d6" stroke-width="1.300" fill="none"/>
</svg>
<div class="t" style="left:217px;top:8.100px;color:#6f7c8c;letter-spacing:-0.33px">Data Flow</div>
<div class="t" style="left:383px;top:5.800px;color:#f0f0f0;-webkit-text-stroke:0.2px #f0f0f0">Data Model</div>
<div class="t" style="left:549px;top:5.800px;color:#f0f0f0;letter-spacing:-0.3px;-webkit-text-stroke:0.2px #f0f0f0">Security</div>

<!-- canvas -->
<div class="abs" id="canvas">
 <svg width="946" height="301" style="left:0;top:0" viewBox="171 39 946 301">
  <g fill="none">
   <path d="M560 138.700 H578.500 Q583.700 138.700 583.700 144 V340" stroke="#707070" stroke-width="1.500"/>
   <path d="M579 138.700 H601" stroke="#b8b8b8" stroke-width="1.200"/>
   <path d="M583.500 208 Q583.500 213.500 589 213.500 H601" stroke="#bdbdbd" stroke-width="1.200"/>
   <path d="M583.500 283 Q583.500 288.500 589 288.500 H601" stroke="#8c8c8c" stroke-width="1.200"/>
   <path d="M810 288.500 H863" stroke="#b0b0b0" stroke-width="1.200"/>
  </g>
  <g fill="#777">
   <path d="M600.400 134 L609 138.500 L600.400 143z"/>
   <path d="M600.400 209 L609 213.500 L600.400 218z"/>
   <path d="M600.400 284 L609 288.500 L600.400 293z"/>
   <path d="M862.300 284 L870.800 288.500 L862.300 293z"/>
  </g>
 </svg>
 <!-- Excel node -->
 <div class="node" style="left:193px;top:74px;width:189px;height:52px;border-color:#808080"></div>
 <div class="port" style="left:374.600px;top:92.200px;border-color:#858585"></div>
 <!-- Select nodes -->
 <div class="node" style="left:443px;top:74px;width:189px;height:52px"></div>
 <div class="port" style="left:437.300px;top:92.200px"></div><div class="port" style="left:624.800px;top:92.200px"></div>
 <div class="node" style="left:443px;top:149px;width:189px;height:52px"></div>
 <div class="port" style="left:437.300px;top:167.200px"></div><div class="port" style="left:624.800px;top:167.200px"></div>
 <div class="node" style="left:443px;top:224px;width:189px;height:52px"></div>
 <div class="port" style="left:437.300px;top:242.200px"></div><div class="port" style="left:624.800px;top:242.200px"></div>
 <div class="node" style="left:443px;top:299px;width:189px;height:52px"></div>
 <!-- Date range node -->
 <div class="node" style="left:704.300px;top:222.500px;width:191.900px;height:55.200px;border:3.400px solid #4a9fb3;background:#e6fafd"></div>
 <div class="port" style="left:699.800px;top:242.300px;border-color:#5aa9be"></div><div class="port" style="left:887px;top:242.300px;border-color:#6fb4c8"></div>
 <svg width="946" height="301" style="left:0;top:0" viewBox="171 39 946 301">
  <!-- excel icon -->
  <path d="M393 127.800 h13.200 q1 0 1 1 v19.600 q0 1 -1 1 h-13.200z" fill="#fff" stroke="#1f7246" stroke-width="1"/>
  <g stroke="#1f7246" stroke-width="1.300"><path d="M397.500 131.500h3.300 M402.300 131.500h3.300 M397.500 134.700h3.300 M402.300 134.700h3.300 M397.500 137.900h3.300 M402.300 137.900h3.300 M397.500 141.100h3.300 M402.300 141.100h3.300 M397.500 144.300h3.300 M402.300 144.300h3.300"/></g>
  <path d="M379 127.800 L395.500 125.200 V151.800 L379 149.200z" fill="#1f7246"/>
  <path d="M383 132.800 h2.600 l1.900 3.700 l1.900 -3.700 h2.600 l-3.100 5.700 l3.200 5.800 h-2.700 l-2 -3.800 l-2 3.800 h-2.600 l3.200 -5.800z" fill="#fff"/>
  <!-- select icons -->
  <g>
   <g fill="#808080"><rect x="629.9" y="125.200" width="5" height="4.500"/><rect x="637.5" y="125.200" width="5" height="4.500"/><rect x="645" y="125.200" width="5" height="4.500"/><rect x="652.4" y="125.200" width="5" height="4.500"/></g>
   <g fill="#b897e0">
    <rect x="629.9" y="133.1" width="5" height="5.6"/><rect x="637.5" y="133.1" width="5" height="5.6"/><rect x="645" y="133.1" width="5" height="5.6"/><rect x="652.4" y="133.1" width="5" height="5.6"/>
    <rect x="629.9" y="140.5" width="5" height="5.6"/><rect x="637.5" y="140.5" width="5" height="5.6"/><rect x="645" y="140.5" width="5" height="5.6"/><rect x="652.4" y="140.5" width="5" height="5.6"/>
    <rect x="629.9" y="148.3" width="5" height="5.6"/><rect x="637.5" y="148.3" width="5" height="5.6"/><rect x="645" y="148.3" width="5" height="5.6"/><rect x="652.4" y="148.3" width="5" height="5.6"/>
   </g>
  </g>
  <g transform="translate(0,75)">
   <g fill="#808080"><rect x="629.9" y="125.200" width="5" height="4.500"/><rect x="637.5" y="125.200" width="5" height="4.500"/><rect x="645" y="125.200" width="5" height="4.500"/><rect x="652.4" y="125.200" width="5" height="4.500"/></g>
   <g fill="#b897e0">
    <rect x="629.9" y="133.1" width="5" height="5.6"/><rect x="637.5" y="133.1" width="5" height="5.6"/><rect x="645" y="133.1" width="5" height="5.6"/><rect x="652.4" y="133.1" width="5" height="5.6"/>
    <rect x="629.9" y="140.5" width="5" height="5.6"/><rect x="637.5" y="140.5" width="5" height="5.6"/><rect x="645" y="140.5" width="5" height="5.6"/><rect x="652.4" y="140.5" width="5" height="5.6"/>
    <rect x="629.9" y="148.3" width="5" height="5.6"/><rect x="637.5" y="148.3" width="5" height="5.6"/><rect x="645" y="148.3" width="5" height="5.6"/><rect x="652.4" y="148.3" width="5" height="5.6"/>
   </g>
  </g>
  <g transform="translate(0,150)">
   <g fill="#808080"><rect x="629.9" y="125.200" width="5" height="4.500"/><rect x="637.5" y="125.200" width="5" height="4.500"/><rect x="645" y="125.200" width="5" height="4.500"/><rect x="652.4" y="125.200" width="5" height="4.500"/></g>
   <g fill="#b897e0">
    <rect x="629.9" y="133.1" width="5" height="5.6"/><rect x="637.5" y="133.1" width="5" height="5.6"/><rect x="645" y="133.1" width="5" height="5.6"/><rect x="652.4" y="133.1" width="5" height="5.6"/>
    <rect x="629.9" y="140.5" width="5" height="5.6"/><rect x="637.5" y="140.5" width="5" height="5.6"/><rect x="645" y="140.5" width="5" height="5.6"/><rect x="652.4" y="140.5" width="5" height="5.6"/>
    <rect x="629.9" y="148.3" width="5" height="5.6"/><rect x="637.5" y="148.3" width="5" height="5.6"/><rect x="645" y="148.3" width="5" height="5.6"/><rect x="652.4" y="148.3" width="5" height="5.6"/>
   </g>
  </g>
  
  <!-- date range node icon -->
  <g>
  <rect x="892.4" y="274.9" width="28.700" height="28" fill="#8fd0c5"/>
  <rect x="892.4" y="274.9" width="28.700" height="4.800" fill="#4fb3a1"/>
  <rect x="893.4" y="279.7" width="26.700" height="22.200" fill="#f7f7f7"/>
  <g fill="#b3b3b3"><rect x="895.00" y="281.80" width="3.300" height="3.300"/><rect x="900.05" y="281.80" width="3.300" height="3.300"/><rect x="905.10" y="281.80" width="3.300" height="3.300"/><rect x="910.15" y="281.80" width="3.300" height="3.300"/><rect x="915.20" y="281.80" width="3.300" height="3.300"/><rect x="895.00" y="286.85" width="3.300" height="3.300"/><rect x="915.20" y="291.90" width="3.300" height="3.300"/><rect x="895.00" y="296.95" width="3.300" height="3.300"/><rect x="900.05" y="296.95" width="3.300" height="3.300"/><rect x="905.10" y="296.95" width="3.300" height="3.300"/><rect x="910.15" y="296.95" width="3.300" height="3.300"/><rect x="915.20" y="296.95" width="3.300" height="3.300"/></g>
  <rect x="900.05" y="286.85" width="3.500" height="3.500" fill="#f5821f"/><rect x="910.15" y="291.90" width="3.500" height="3.500" fill="#f5821f"/>
  <path d="M904.80 288.55H918.50 M895.00 293.60H908.70" stroke="#8a8a8a" stroke-width="0.900"/>
  </g>
 </svg>
 <div class="t nt" style="left:245px;top:83px;letter-spacing:-0.6px">Excel</div>
 <div class="t ns" style="left:245px;top:98.500px;letter-spacing:-0.04px">SpreadhSheetDemo...</div>
 <div class="t nt" style="left:495.500px;top:83px;letter-spacing:-0.25px">Select</div>
 <div class="t ns" style="left:495.500px;top:98.500px;letter-spacing:0.19px">customerProfile</div>
 <div class="t nt" style="left:495.500px;top:158px;letter-spacing:-0.25px">Select</div>
 <div class="t ns" style="left:495.500px;top:173.500px;letter-spacing:0.19px">customers</div>
 <div class="t nt" style="left:495.500px;top:233px;letter-spacing:-0.25px">Select</div>
 <div class="t ns" style="left:495.500px;top:248.500px;letter-spacing:0.15px">data</div>
 <div class="t nt" style="left:758px;top:233.200px;letter-spacing:-0.1px">Date Range</div>
 <div class="t ns" style="left:758px;top:248.500px;letter-spacing:0.1px">DimDate</div>
</div>
<div class="abs" id="cscroll"></div>
<svg width="13" height="301" style="left:1117px;top:39px" viewBox="1117 39 13 301">
  <rect x="1117" y="52" width="13" height="288" fill="#686868"/>
  <path d="M1118.600 47 L1123.500 42 L1128.400 47z" fill="#c9c9c9"/>
</svg>

<!-- preview -->
<div class="abs" id="pv-head"></div>
<div class="abs" style="left:171px;top:378px;width:959px;height:1px;background:#2a2a2a"></div>
<div class="abs" id="pv-th"></div>
<div class="abs row" style="top:411px;height:33px;background:#4b4b4b"></div>
<div class="abs row" style="top:444px;height:32px;background:#545454"></div>
<div class="abs row" style="top:476px;height:32.700px;background:#4b4b4b"></div>
<div class="abs row" style="top:508.600px;height:32.200px;background:#545454"></div>
<div class="abs row" style="top:540.700px;height:33.300px;background:#4b4b4b"></div>
<div class="abs row" style="top:574px;height:5px;background:#545454"></div>
<div class="abs" style="left:1117px;top:411px;width:13px;height:168px;background:#4e4e4e"></div>
<div class="abs" style="left:295px;top:379px;width:1px;height:32px;background:#2c2c2c"></div>
<div class="abs" style="left:295px;top:411px;width:1px;height:168px;background:#454545"></div>
<div class="abs" style="left:171px;top:578.500px;width:959px;height:4px;background:#222"></div>
<div class="abs" style="left:171px;top:582.500px;width:959px;height:45px;background:#484848"></div>
<div class="abs" style="left:398px;top:582.500px;width:3.500px;height:45px;background:#2a2a2a"></div>
<svg width="959" height="250" style="left:171px;top:340px" viewBox="171 340 959 250">
  <!-- sort icon -->
  <g fill="#4a90e2"><rect x="182" y="387.500" width="16.500" height="2.300"/><rect x="182" y="391.400" width="12" height="2.300"/><rect x="182" y="395.300" width="8" height="2.300"/><rect x="182" y="399.200" width="4.500" height="2.300"/></g>
  <!-- eye -->
  <path d="M1047 359.200 C1051.500 351 1060.700 351 1065.200 359.200 C1060.700 367.400 1051.500 367.400 1047 359.200z" fill="none" stroke="#cfcfcf" stroke-width="1.200"/>
  <circle cx="1056.100" cy="359.200" r="3.200" fill="none" stroke="#cfcfcf" stroke-width="1.200"/>
  <!-- pin -->
  <path d="M1085 352.500 L1090.800 358.300 L1088.600 358.800 L1086 361.400 L1085.500 364.300 L1082.300 361.100 L1077 366.400 L1082.300 361.100 L1079.100 357.900 L1082 357.400 L1084.600 354.800z" fill="#cfcfcf" stroke="#cfcfcf" stroke-width="0.800"/>
  <!-- chevron -->
  <path d="M1104.500 356.300 L1111.200 363 L1118 356.300" fill="none" stroke="#cfcfcf" stroke-width="1.300"/>
  <!-- scroll -->
  <path d="M1119 418.800 L1123.500 414.300 L1128 418.800z" fill="#c4c4c4"/>
  <rect x="1117.500" y="424.400" width="12.500" height="18.500" fill="#6c6c6c"/>
  <path d="M1119 569 L1123.500 573.500 L1128 569z" fill="#c4c4c4"/>
</svg>
<div class="t" style="left:181.500px;top:348.500px;color:#e2e2e2;letter-spacing:-0.15px;-webkit-text-stroke:0.4px #e2e2e2">Preview</div>
<div class="t" style="left:200.500px;top:385.500px;color:#fff;-webkit-text-stroke:0.7px #fff">Date</div>
<div class="t" style="left:180px;top:418.500px;color:#d6d6d6;-webkit-text-stroke:0.15px #d6d6d6">2008-01-02</div>
<div class="t" style="left:180px;top:451px;color:#d6d6d6;-webkit-text-stroke:0.15px #d6d6d6">2008-02-02</div>
<div class="t" style="left:180px;top:483.500px;color:#d6d6d6;-webkit-text-stroke:0.15px #d6d6d6">2008-03-02</div>
<div class="t" style="left:180px;top:516px;color:#d6d6d6;-webkit-text-stroke:0.15px #d6d6d6">2008-04-02</div>
<div class="t" style="left:180px;top:548.500px;color:#d6d6d6;-webkit-text-stroke:0.15px #d6d6d6">2008-05-02</div>

<div class="abs" id="pp"></div>
<div class="abs" style="left:1130px;top:0;width:4px;height:623px;background:#2b2b2b"></div>
<div class="abs" style="left:1134px;top:35px;width:400px;height:1px;background:#2f2f2f"></div>
<div class="abs" style="left:1492px;top:36px;width:20px;height:600px;background:#666"></div>
<div class="sec" style="top:50px;height:119px"></div>
<div class="sec" style="top:173px;height:343px"></div>
<div class="sec" style="top:520.300px;height:34.500px"></div>
<div class="sec" style="top:558.700px;height:60px"></div>
<div class="inp" style="left:1166px;top:118.500px;width:317px;height:32.200px"></div>
<div class="dd" style="left:1163px;top:238px;width:324px;height:31.600px"></div>
<div class="dd" style="left:1163px;top:315.200px;width:324px;height:31.600px"></div>
<div class="dd" style="left:1163px;top:392.200px;width:324px;height:31.600px"></div>
<div class="inp" style="left:1163.500px;top:469.500px;width:323px;height:30.500px"></div>
<svg width="396" height="623" style="left:1134px;top:0" viewBox="1134 0 396 623">
  <!-- eye -->
  <path d="M1461.300 16.200 C1465.800 8 1474.500 8 1479 16.200 C1474.500 24.400 1465.800 24.400 1461.300 16.200z" fill="none" stroke="#cfcfcf" stroke-width="1.200"/>
  <circle cx="1470.100" cy="16.200" r="3.200" fill="none" stroke="#cfcfcf" stroke-width="1.200"/>
  <!-- chevrons down -->
  <path d="M1162 65 L1168.500 71.500 L1175 65" fill="none" stroke="#d0d0d0" stroke-width="1.300"/>
  <path d="M1162 187.300 L1168.500 193.800 L1175 187.300" fill="none" stroke="#d0d0d0" stroke-width="1.300"/>
  <!-- chevrons right -->
  <path d="M1164.500 531.500 L1171 538 L1164.500 544.500" fill="none" stroke="#d0d0d0" stroke-width="1.300"/>
  <path d="M1164.500 569.500 L1171 576 L1164.500 582.500" fill="none" stroke="#d0d0d0" stroke-width="1.300"/>
  <!-- dropdown arrows -->
  <g fill="#b4b4b4"><path d="M1461 249 H1473 L1467 255z"/><path d="M1461 326.500 H1473 L1467 332.500z"/><path d="M1461 403 H1473 L1467 409z"/></g>
  <!-- date range small icon -->
  <rect x="1184" y="180.8" width="18.300" height="18.800" fill="#86c7bc"/>
  <rect x="1184" y="180.8" width="18.300" height="3.600" fill="#5db5a8"/>
  <rect x="1184.8" y="184.4" width="16.700" height="14.400" fill="#5c5c5c"/>
  <g fill="#8f8f8f"><rect x="1185.70" y="185.70" width="2.200" height="2.300"/><rect x="1188.85" y="185.70" width="2.200" height="2.300"/><rect x="1192.00" y="185.70" width="2.200" height="2.300"/><rect x="1195.15" y="185.70" width="2.200" height="2.300"/><rect x="1198.30" y="185.70" width="2.200" height="2.300"/><rect x="1185.70" y="189.10" width="2.200" height="2.300"/><rect x="1198.30" y="189.10" width="2.200" height="2.300"/><rect x="1185.70" y="192.50" width="2.200" height="2.300"/><rect x="1198.30" y="192.50" width="2.200" height="2.300"/><rect x="1185.70" y="195.90" width="2.200" height="2.300"/><rect x="1188.85" y="195.90" width="2.200" height="2.300"/><rect x="1192.00" y="195.90" width="2.200" height="2.300"/><rect x="1195.15" y="195.90" width="2.200" height="2.300"/><rect x="1198.30" y="195.90" width="2.200" height="2.300"/></g>
  <rect x="1188.85" y="189.00" width="2.500" height="2.500" fill="#f5821f"/><rect x="1195.15" y="192.40" width="2.500" height="2.500" fill="#f5821f"/>
  <path d="M1192.00 190.30H1197.55 M1188.85 193.70H1194.60" stroke="#d8d8d8" stroke-width="0.700"/>
  <!-- column selection icon -->
  <g fill="#6a6a6a">
   <rect x="1184" y="529" width="2.500" height="2.900"/><rect x="1184" y="534" width="2.500" height="14"/>
   <rect x="1193.200" y="529" width="3.600" height="2.900"/><rect x="1193.200" y="534" width="3.600" height="14"/>
   <rect x="1198.300" y="529" width="3.400" height="2.900"/><rect x="1198.300" y="534" width="3.400" height="14"/>
  </g>
  <rect x="1187.900" y="529" width="3.600" height="2.900" fill="#f0f0f0"/>
  <rect x="1187.900" y="534" width="3.600" height="14" fill="#45b5a8"/>
  <path d="M1196.200 544.300 l2 2.600 l3.600 -4.200" fill="none" stroke="#7cb342" stroke-width="1.100"/>
  <!-- set variable values icon -->
  <text x="1184.800" y="581.800" font-family="Liberation Sans, sans-serif" font-size="20" font-style="italic" fill="#f5901e">#</text>
  <text x="1192" y="583" font-family="Liberation Sans, sans-serif" font-size="9.500" fill="#d0d0d0">@</text>
</svg>
<div class="t" style="left:1144px;top:6.500px;color:#efefef;-webkit-text-stroke:0.3px #efefef">Properties</div>
<div class="t sh" style="left:1185.500px;top:58.500px">Result Properties</div>
<div class="t lbl" style="top:85px;letter-spacing:-0.22px">Resulting Table Name</div>
<div class="t" style="left:1175px;top:125px;color:#333">DimDate</div>
<div class="t sh" style="left:1214.500px;top:180.500px">Date Range Node</div>
<div class="t lbl" style="top:207.500px;letter-spacing:-0.1px">Time Interval</div>
<div class="t ddt" style="top:244.700px;letter-spacing:0.6px">Month</div>
<div class="t lbl" style="top:284.500px;letter-spacing:-0.2px">DateRangeFunction</div>
<div class="t ddt" style="top:321.500px;letter-spacing:0.4px">Min/Max</div>
<div class="t lbl" style="top:361.500px;letter-spacing:-0.2px">Source Column Name</div>
<div class="t ddt" style="top:398.500px;letter-spacing:-0.3px">dateKey</div>
<div class="t lbl" style="top:438.500px;letter-spacing:-0.17px">Column Name:</div>
<div class="t" style="left:1171.500px;top:475px;color:#333">Date</div>
<div class="t sh" style="left:1214.500px;top:528.800px">Column Selection</div>
<div class="t sh" style="left:1214.500px;top:566.700px">Set Variable Values</div>

<svg width="1530" height="623" style="left:0;top:0" viewBox="0 0 1530 623">
  <path d="M144.6 151.8 C146.2 152.9 149.8 156.4 154.0 158.6 C158.2 160.8 164.0 163.1 170.0 165.0 C176.0 166.9 182.5 168.6 190.0 170.2 C197.5 171.8 205.0 172.9 215.0 174.3 C225.0 175.7 234.2 176.9 250.0 178.4 C265.8 179.9 288.3 182.1 310.0 183.6 C331.7 185.1 356.7 186.4 380.0 187.6 C403.3 188.8 426.7 189.6 450.0 190.8 C473.3 192.0 496.7 193.1 520.0 194.8 C543.3 196.5 568.3 198.6 590.0 201.0 C611.7 203.4 630.0 206.0 650.0 209.4 C670.0 212.8 691.7 217.2 710.0 221.5 C728.3 225.8 745.0 230.6 760.0 235.2 C775.0 239.8 787.5 244.2 800.0 249.0 C812.5 253.8 825.3 259.5 835.0 263.9 C844.7 268.3 851.3 271.9 858.0 275.4 C864.7 278.9 872.2 283.2 875.0 284.8" fill="none" stroke="#00fd10" stroke-width="6.2"/>
  <path d="M891 295.9 L865.3 293.5 L879 273.4z" fill="#00fd10"/>
  <path d="M1040.1 292.0 C1042.2 291.7 1048.2 291.4 1052.5 290.2 C1056.8 289.0 1061.8 287.2 1065.9 284.6 C1070.0 282.0 1074.0 278.4 1077.2 274.5 C1080.4 270.6 1082.8 265.9 1085.0 261.0 C1087.2 256.1 1088.9 250.5 1090.6 245.3 C1092.3 240.1 1093.6 234.8 1095.1 229.6 C1096.6 224.4 1097.7 219.1 1099.6 213.9 C1101.5 208.7 1103.4 202.7 1106.4 198.2 C1109.4 193.7 1113.5 189.6 1117.6 186.9 C1121.7 184.2 1126.9 183.0 1131.0 182.0 C1135.1 181.0 1140.2 180.9 1142.0 180.7" fill="none" stroke="#00fd10" stroke-width="6"/>
  <path d="M1164.7 180.7 L1141.2 169.4 L1141.2 192.1z" fill="#00fd10"/>
  <path d="M1163.1 478.8 C1160.6 479.2 1153.4 480.7 1148.3 481.2 C1143.2 481.7 1137.5 482.0 1132.2 482.1 C1126.9 482.1 1122.9 482.0 1116.2 481.6 C1109.5 481.2 1101.4 480.6 1092.0 479.7 C1082.6 478.8 1070.3 477.5 1060.0 476.4 C1049.7 475.3 1046.7 475.2 1030.0 473.0 C1013.3 470.8 985.0 467.1 960.0 463.4 C935.0 459.6 906.7 454.9 880.0 450.5 C853.3 446.1 826.7 441.2 800.0 436.7 C773.3 432.2 746.7 427.4 720.0 423.3 C693.3 419.2 666.7 415.4 640.0 411.9 C613.3 408.4 586.7 405.1 560.0 402.3 C533.3 399.5 506.7 397.1 480.0 395.2 C453.3 393.3 423.3 391.7 400.0 390.8 C376.7 389.9 358.3 389.9 340.0 389.8 C321.7 389.7 298.3 390.3 290.0 390.4" fill="none" stroke="#ffff00" stroke-width="6.2"/>
  <path d="M266.8 391.5 L290.1 378.8 L291.1 402.5z" fill="#ffff00"/>
</svg>
<div class="abs" style="left:0;top:0;width:168px;height:1px;background:#3a3a3a"></div><div class="abs" style="left:168px;top:0;width:1362px;height:1px;background:#282828"></div>

<svg width="1530" height="623" style="left:0;top:0" viewBox="0 0 1530 623"><path d="M-20.0,580.2 L0.0,580.2 L2.3,579.7 L4.5,582.0 L6.8,581.6 L8.9,580.7 L11.0,578.5 L12.1,579.8 L13.2,582.3 L14.2,584.1 L15.3,586.1 L17.6,586.8 L19.8,587.4 L22.1,587.0 L24.6,586.7 L27.2,588.4 L29.5,586.0 L31.7,586.9 L34.0,585.0 L36.1,585.6 L38.2,587.3 L40.4,586.3 L42.5,588.4 L44.4,588.4 L46.3,589.2 L48.2,588.1 L50.1,590.1 L52.0,590.1 L54.0,588.1 L55.9,588.2 L57.8,589.5 L59.5,591.1 L61.2,593.5 L62.9,593.5 L64.6,594.5 L66.3,596.4 L68.0,598.0 L71.4,598.0 L72.6,595.3 L73.8,594.2 L75.0,593.1 L76.2,591.7 L77.4,589.5 L78.7,587.9 L79.9,587.0 L82.1,585.4 L84.4,585.2 L86.7,584.4 L88.6,584.2 L90.5,583.9 L92.4,586.2 L94.3,585.9 L96.2,586.4 L98.1,585.6 L100.0,587.9 L102.0,587.0 L103.8,588.3 L105.7,586.8 L107.6,587.7 L109.5,589.1 L111.4,589.4 L113.3,590.3 L115.2,589.4 L117.1,590.8 L118.9,590.4 L120.3,589.2 L121.6,586.6 L123.0,585.7 L124.3,584.7 L125.6,583.0 L127.0,580.5 L128.3,578.8 L129.8,580.7 L131.4,580.9 L132.9,583.1 L134.4,586.1 L135.9,587.0 L138.1,587.8 L140.2,588.3 L142.3,590.3 L144.4,591.2 L146.6,592.0 L148.7,592.1 L150.8,591.6 L152.9,592.1 L155.5,589.5 L156.9,590.8 L158.3,592.4 L159.7,593.8 L161.8,594.8 L163.8,594.4 L165.8,594.3 L167.9,594.9 L169.9,595.1 L172.5,593.7 L175.0,594.6 L176.7,594.6 L178.4,597.4 L180.1,598.0 L182.0,599.0 L183.9,597.8 L185.9,597.1 L187.8,596.4 L189.7,597.0 L191.6,598.0 L193.5,597.2 L195.4,596.3 L197.7,597.0 L199.9,598.4 L202.2,598.0 L204.2,596.9 L206.3,597.1 L208.3,597.6 L210.4,596.2 L212.4,595.5 L214.3,595.6 L216.2,595.3 L218.1,596.2 L220.1,597.5 L222.0,595.3 L223.9,597.5 L225.8,597.8 L227.7,597.2 L229.6,597.5 L231.6,596.6 L233.5,596.1 L235.5,594.8 L237.4,594.3 L239.3,593.4 L241.3,592.9 L243.2,592.2 L245.2,594.7 L247.1,594.4 L249.1,593.8 L251.0,595.0 L252.9,595.4 L254.9,595.8 L257.4,596.2 L260.0,597.2 L262.1,596.0 L264.2,595.6 L266.4,594.9 L268.5,593.8 L270.0,592.6 L271.4,590.8 L272.9,588.2 L274.3,587.3 L275.8,585.7 L277.2,585.3 L278.7,583.6 L282.1,585.3 L283.5,587.8 L284.9,589.2 L286.3,590.7 L287.8,592.3 L289.2,592.5 L290.6,594.6 L292.7,595.5 L294.7,595.1 L296.8,593.6 L298.9,593.4 L301.0,593.4 L303.0,595.3 L305.1,594.0 L307.2,593.7 L309.3,594.6 L310.6,593.4 L312.0,591.2 L313.4,589.0 L314.7,587.7 L316.1,587.0 L318.0,586.3 L319.9,584.6 L321.8,584.1 L323.7,583.9 L325.6,585.0 L327.5,584.9 L329.3,585.1 L331.2,586.0 L333.1,586.7 L335.0,586.0 L336.9,587.5 L338.8,588.2 L340.7,588.2 L342.6,588.5 L344.5,591.1 L346.4,590.7 L348.4,591.2 L350.4,590.5 L352.4,591.5 L354.5,592.0 L356.5,590.0 L358.6,591.2 L360.3,588.9 L362.0,589.0 L365.4,590.4 L367.5,588.4 L369.6,588.8 L371.7,586.4 L373.8,586.1 L376.0,587.1 L378.1,587.4 L380.2,587.5 L382.3,587.8 L384.5,587.2 L386.6,589.2 L388.7,588.8 L390.8,588.1 L393.0,587.5 L395.1,588.6 L397.2,588.0 L399.3,588.4 L401.0,590.4 L402.7,591.5 L404.4,593.8 L405.9,595.5 L407.3,595.5 L408.7,597.5 L410.1,600.6 L411.5,601.8 L412.9,602.3 L415.0,601.6 L417.0,602.8 L419.0,601.3 L421.1,602.7 L423.1,601.4 L425.2,601.5 L427.2,600.2 L429.2,599.3 L431.3,598.2 L433.3,598.9 L434.5,598.3 L435.6,594.6 L436.7,595.0 L437.9,593.8 L439.0,591.3 L440.1,589.5 L442.1,588.5 L444.1,590.1 L446.1,590.1 L448.0,589.3 L450.0,588.6 L452.0,588.4 L453.4,589.4 L454.8,590.6 L456.3,591.6 L457.7,594.1 L459.1,594.8 L460.5,596.3 L461.9,594.2 L463.2,592.6 L464.6,592.7 L465.9,590.4 L467.3,589.5 L469.4,588.7 L471.6,587.4 L473.7,587.9 L475.8,586.1 L477.7,587.4 L479.7,585.4 L481.6,586.1 L483.6,586.7 L485.5,588.6 L487.5,588.3 L489.4,587.8 L490.8,586.2 L492.2,584.6 L493.6,584.5 L495.1,583.6 L496.5,582.6 L497.9,580.2 L500.2,579.8 L502.4,581.2 L504.7,580.2 L506.7,580.0 L508.8,578.8 L510.8,579.4 L512.8,576.8 L514.9,576.8 L517.4,577.8 L520.0,577.6 L522.5,576.0 L525.1,576.5 L527.4,576.0 L529.6,578.3 L531.9,577.6 L533.2,578.8 L534.4,582.1 L535.7,583.6 L537.0,585.3 L538.5,587.5 L540.0,587.7 L541.5,589.0 L542.9,590.3 L544.4,593.1 L545.9,593.8 L547.4,596.1 L548.9,596.3 L550.5,596.2 L552.0,593.2 L553.6,593.2 L555.2,591.0 L556.8,589.7 L558.4,588.7 L559.9,588.7 L561.5,590.9 L563.1,592.1 L564.7,593.5 L566.4,593.6 L568.0,595.6 L569.6,597.3 L571.2,597.6 L572.8,599.4 L574.4,600.6 L576.3,599.5 L578.3,598.8 L580.2,598.9 L582.1,600.1 L584.1,598.9 L586.0,599.5 L588.0,598.0 L589.7,596.6 L591.4,594.8 L593.1,594.8 L594.8,593.5 L596.5,590.2 L598.2,590.1 L599.9,591.4 L601.6,590.9 L603.3,591.9 L605.0,593.8 L606.3,596.5 L607.7,596.0 L609.0,598.2 L610.4,601.8 L611.8,602.3 L613.9,601.5 L616.0,600.0 L618.1,599.5 L620.3,599.7 L621.7,597.8 L623.2,597.7 L624.6,594.7 L626.1,595.4 L627.5,592.8 L629.0,592.9 L630.5,590.4 L632.6,590.9 L634.7,588.9 L636.8,588.2 L638.9,588.4 L641.1,588.7 L643.2,588.2 L645.3,590.0 L647.4,590.1 L649.7,588.2 L652.0,587.4 L654.2,587.8 L656.2,589.5 L658.1,588.3 L660.1,589.5 L662.0,589.7 L663.9,589.8 L665.9,589.7 L667.8,591.2 L670.0,591.6 L672.1,591.1 L674.2,590.5 L676.3,588.7 L678.3,588.2 L680.2,589.0 L682.2,590.4 L684.1,591.8 L686.0,591.2 L688.0,592.1 L689.9,592.1 L691.9,592.4 L693.8,591.4 L695.7,592.0 L697.7,591.4 L699.6,591.2 L701.6,590.8 L703.5,591.8 L705.4,591.0 L707.3,592.5 L709.3,591.0 L711.2,591.3 L713.1,591.0 L715.0,591.6 L716.9,590.0 L718.8,590.1 L720.4,588.3 L722.0,587.0 L723.5,585.7 L725.1,585.8 L726.7,584.6 L728.3,581.8 L729.9,581.0 L732.2,580.8 L734.5,581.6 L736.9,581.9 L739.2,581.9 L740.9,580.9 L742.6,579.3 L744.7,578.8 L746.8,578.4 L749.0,579.1 L751.1,579.9 L751.9,580.6 L752.8,583.6 L753.6,584.2 L754.5,586.1 L755.3,589.3 L756.2,590.2 L757.0,593.3 L757.9,594.4 L758.7,597.1 L759.6,598.0 L761.6,597.6 L763.6,598.9 L765.5,600.0 L767.5,598.7 L769.5,601.3 L771.5,600.6 L773.6,599.6 L775.7,600.9 L777.9,601.2 L780.0,599.7 L780.8,598.8 L781.5,595.7 L782.3,593.4 L783.1,592.7 L783.9,591.9 L784.6,588.6 L785.4,588.3 L786.2,584.6 L787.0,584.8 L787.7,580.8 L788.5,580.2 L790.5,579.4 L792.6,580.5 L794.6,579.9 L796.7,579.9 L798.7,578.5 L800.9,579.4 L803.1,579.2 L805.3,579.2 L807.5,578.0 L809.7,578.8 L811.0,580.1 L812.2,580.9 L813.4,583.8 L814.6,585.1 L815.9,585.6 L817.1,586.6 L818.3,590.3 L819.6,591.4 L820.8,592.1 L822.7,592.0 L824.6,591.8 L826.5,592.3 L828.4,591.1 L830.3,590.8 L832.3,590.4 L834.2,590.0 L836.1,590.4 L838.1,589.2 L840.2,590.7 L842.2,590.1 L844.2,590.4 L846.3,589.1 L848.3,589.8 L850.3,589.2 L852.4,589.2 L854.4,589.5 L856.5,590.1 L858.4,590.7 L860.3,589.5 L862.3,589.4 L864.2,589.7 L866.2,588.7 L868.1,587.9 L870.1,589.0 L871.8,590.2 L873.5,591.2 L875.2,592.6 L876.9,593.2 L878.6,594.9 L880.3,595.5 L881.7,594.7 L883.2,592.0 L884.6,591.3 L886.1,589.8 L887.5,587.8 L889.0,586.8 L890.5,585.6 L892.6,586.0 L894.7,587.0 L896.8,587.2 L898.9,585.8 L901.1,586.8 L903.2,585.5 L905.3,585.8 L907.4,587.0 L909.5,587.0 L911.5,587.9 L913.6,586.0 L915.6,587.5 L917.6,587.8 L919.7,586.3 L921.7,587.2 L923.8,587.6 L925.8,586.4 L927.8,586.7 L929.9,587.2 L931.9,587.3 L934.0,587.0 L936.0,587.7 L938.0,587.8 L940.1,588.0 L942.1,587.1 L944.1,586.1 L946.2,586.3 L948.2,587.0 L949.7,587.8 L951.2,590.1 L952.7,592.1 L954.2,591.8 L955.7,594.9 L957.1,596.5 L958.6,597.0 L960.1,598.9 L961.5,597.4 L962.8,595.0 L964.2,594.9 L965.6,591.6 L966.9,591.2 L969.0,592.3 L971.2,591.7 L973.3,591.1 L975.4,590.1 L977.5,591.5 L979.7,591.5 L981.8,589.3 L983.9,590.1 L986.0,590.8 L988.2,591.1 L990.3,590.7 L992.4,590.9 L994.5,590.3 L996.7,591.6 L998.8,591.8 L1000.9,590.7 L1002.9,590.1 L1005.0,590.8 L1007.0,589.5 L1009.1,588.5 L1011.1,588.6 L1013.1,587.8 L1015.2,589.4 L1017.2,589.2 L1019.3,586.7 L1021.3,587.3 L1023.2,587.9 L1025.2,587.7 L1027.1,587.3 L1029.1,588.1 L1031.0,588.3 L1032.9,589.8 L1034.9,589.5 L1037.4,588.6 L1040.0,590.1 L1042.1,589.2 L1044.2,589.8 L1046.4,588.7 L1048.5,590.1 L1050.6,590.0 L1052.7,590.5 L1054.9,588.9 L1057.0,589.5 L1059.1,589.2 L1061.2,590.1 L1063.4,589.6 L1065.5,590.6 L1067.6,590.0 L1069.7,591.3 L1071.9,591.8 L1074.0,591.2 L1075.9,591.8 L1077.8,591.9 L1079.6,590.6 L1081.5,590.2 L1083.4,590.9 L1085.3,590.4 L1087.2,589.7 L1089.1,589.0 L1091.0,589.0 L1092.9,588.2 L1094.8,587.4 L1096.6,588.8 L1098.5,586.8 L1100.4,588.0 L1102.3,587.2 L1104.2,587.9 L1106.1,587.1 L1108.0,586.1 L1109.9,587.7 L1111.9,586.0 L1113.8,587.2 L1115.7,587.8 L1117.7,587.5 L1119.6,588.3 L1121.6,588.7 L1123.0,589.9 L1124.4,591.9 L1125.8,592.1 L1127.2,594.8 L1128.6,596.4 L1130.1,598.0 L1132.2,598.1 L1134.3,598.9 L1136.4,600.4 L1138.6,600.2 L1140.6,599.9 L1142.6,598.7 L1144.7,598.3 L1146.7,596.8 L1148.8,596.3 L1150.2,594.2 L1151.6,592.3 L1153.0,591.5 L1154.4,590.9 L1155.8,590.2 L1157.2,587.8 L1159.2,588.6 L1161.1,587.7 L1163.0,588.7 L1164.9,587.3 L1166.8,588.1 L1168.7,587.0 L1170.6,587.7 L1172.5,587.0 L1174.5,587.9 L1176.5,585.8 L1178.5,585.1 L1180.5,585.9 L1182.5,585.4 L1184.4,585.0 L1186.6,584.4 L1188.7,583.4 L1190.8,584.2 L1192.9,584.1 L1195.1,583.9 L1197.2,584.8 L1199.3,584.0 L1201.4,583.6 L1203.6,584.4 L1205.7,585.0 L1207.8,584.9 L1209.9,584.4 L1212.0,585.3 L1214.2,585.2 L1216.3,585.5 L1218.4,585.3 L1220.5,585.7 L1222.7,585.3 L1224.8,585.9 L1226.9,586.1 L1229.0,586.9 L1231.2,586.6 L1233.3,586.9 L1235.4,586.1 L1237.4,586.5 L1239.4,586.4 L1241.4,585.6 L1243.3,584.6 L1245.3,584.1 L1247.3,584.4 L1249.0,586.0 L1250.7,587.5 L1252.4,587.7 L1254.1,587.7 L1255.8,590.5 L1257.5,590.6 L1259.2,591.6 L1260.9,591.6 L1262.6,593.8 L1264.7,593.6 L1266.8,594.0 L1269.0,593.0 L1271.1,592.9 L1272.8,591.3 L1274.5,590.8 L1276.2,587.9 L1277.9,587.8 L1279.9,587.2 L1282.0,587.6 L1284.0,586.3 L1286.0,584.9 L1288.1,584.4 L1290.1,585.2 L1292.1,585.2 L1294.0,584.4 L1296.0,584.7 L1298.0,586.6 L1300.0,585.9 L1301.9,586.0 L1303.8,586.3 L1305.6,588.9 L1307.5,588.9 L1309.8,589.5 L1312.0,589.7 L1314.3,590.6 L1316.5,591.1 L1318.0,590.2 L1319.5,587.3 L1321.0,587.0 L1322.5,585.6 L1324.1,584.4 L1325.6,581.5 L1327.1,580.6 L1329.7,580.9 L1332.3,580.6 L1333.7,581.4 L1335.0,583.7 L1336.4,584.3 L1337.7,587.3 L1339.1,588.1 L1341.1,589.3 L1343.1,588.2 L1345.1,588.2 L1347.1,590.3 L1349.1,589.9 L1351.1,589.6 L1353.1,590.4 L1355.1,588.3 L1357.1,590.4 L1359.1,589.6 L1361.1,588.7 L1363.1,588.9 L1365.1,589.7 L1367.1,589.7 L1369.2,588.9 L1370.8,589.4 L1372.4,591.7 L1374.0,591.9 L1375.6,595.2 L1377.2,595.2 L1378.8,597.6 L1380.4,597.9 L1384.2,597.9 L1385.4,596.8 L1386.6,594.8 L1387.8,592.3 L1389.0,591.3 L1390.2,589.6 L1392.1,588.3 L1394.0,588.0 L1395.8,589.0 L1397.7,587.8 L1399.6,588.4 L1401.5,586.7 L1403.4,587.5 L1405.2,586.6 L1407.2,586.7 L1409.1,585.3 L1411.0,584.3 L1413.0,584.6 L1414.9,584.4 L1416.8,583.0 L1418.8,583.6 L1420.8,584.3 L1422.8,585.5 L1424.8,588.1 L1426.9,588.0 L1429.0,588.5 L1431.1,586.5 L1433.2,585.7 L1435.3,586.6 L1437.4,587.2 L1439.6,587.6 L1441.7,588.1 L1443.9,587.3 L1446.0,586.7 L1448.2,588.1 L1450.3,587.4 L1452.5,586.5 L1454.6,588.0 L1456.8,586.5 L1458.9,587.4 L1461.1,587.7 L1463.2,587.4 L1465.4,587.8 L1467.4,585.8 L1469.4,584.8 L1471.4,584.3 L1473.6,585.7 L1475.9,585.4 L1478.1,586.2 L1480.4,586.6 L1481.0,583.9 L1481.6,583.1 L1482.3,580.2 L1482.9,578.8 L1483.5,577.6 L1484.2,574.6 L1483.4,580.3 L1485.4,578.5 L1486.1,576.6 L1484.7,574.8 L1486.6,572.9 L1487.2,571.9 L1490.7,570.8 L1492.0,569.7 L1493.5,568.6 L1494.2,567.6 L1496.3,566.5 L1498.1,564.9 L1499.8,563.3 L1501.3,561.7 L1501.8,560.1 L1504.3,558.5 L1502.1,557.3 L1500.0,556.0 L1498.8,554.8 L1496.3,553.6 L1495.6,552.6 L1493.6,551.5 L1490.8,550.4 L1488.6,549.3 L1486.3,548.3 L1485.0,547.2 L1485.2,545.7 L1486.5,544.3 L1488.9,542.8 L1489.8,541.4 L1491.3,539.9 L1493.9,538.4 L1494.3,537.0 L1495.7,535.5 L1496.2,534.0 L1497.0,532.6 L1499.5,531.1 L1498.6,529.1 L1497.8,527.1 L1498.3,525.1 L1499.1,523.1 L1497.9,521.1 L1496.3,519.1 L1497.7,517.1 L1496.3,515.0 L1498.6,513.9 L1500.1,512.7 L1502.1,511.5 L1503.4,510.3 L1505.0,509.2 L1505.9,508.0 L1503.9,506.5 L1503.9,505.1 L1502.2,503.6 L1499.5,502.2 L1497.0,501.1 L1496.9,500.0 L1495.2,499.0 L1493.0,497.9 L1491.5,496.8 L1489.8,495.8 L1490.5,493.9 L1492.3,492.1 L1491.9,490.2 L1493.4,488.4 L1492.9,486.6 L1494.9,484.7 L1494.7,482.9 L1495.0,481.0 L1493.3,479.0 L1492.9,477.1 L1493.1,475.2 L1491.4,473.2 L1490.4,472.0 L1488.2,470.7 L1485.9,469.4 L1484.6,468.1 L1483.4,466.8 L1485.4,465.4 L1485.5,464.0 L1488.9,462.6 L1488.8,461.2 L1491.9,459.8 L1491.9,458.4 L1495.0,457.0 L1495.3,455.6 L1494.5,454.0 L1492.6,452.3 L1491.3,450.7 L1489.8,449.1 L1491.8,448.0 L1493.3,446.8 L1494.2,445.7 L1495.5,444.5 L1497.9,443.4 L1500.6,442.2 L1501.1,441.1 L1502.6,439.5 L1502.4,437.9 L1505.5,436.3 L1505.9,434.7 L1505.9,432.7 L1505.7,430.6 L1503.3,428.6 L1504.1,426.6 L1501.8,424.6 L1502.7,422.6 L1501.1,420.6 L1501.1,418.6 L1501.6,416.7 L1504.3,414.9 L1503.6,413.1 L1505.7,411.2 L1507.7,409.4 L1507.3,407.6 L1509.1,405.7 L1508.0,403.7 L1509.3,401.7 L1507.7,399.7 L1508.1,397.7 L1506.0,395.7 L1506.4,393.7 L1505.5,391.7 L1505.9,389.6 L1505.5,387.5 L1503.2,385.4 L1503.3,383.2 L1501.1,386.1 L1503.3,384.5 L1502.1,382.9 L1504.9,381.3 L1504.2,379.7 L1505.8,378.1 L1507.5,376.5 L1506.4,375.5 L1502.8,374.6 L1500.9,373.6 L1500.3,372.6 L1497.9,371.7 L1495.7,370.7 L1492.9,369.7 L1493.3,368.8 L1489.3,367.8 L1488.2,366.8 L1488.7,365.5 L1491.1,364.1 L1493.3,362.7 L1495.3,361.3 L1495.3,360.0 L1497.5,358.6 L1499.5,357.2 L1497.8,355.1 L1498.3,352.9 L1497.9,350.8 L1498.1,348.8 L1497.5,346.9 L1497.4,345.0 L1496.6,343.1 L1496.4,341.1 L1495.5,339.2 L1494.4,337.3 L1493.3,335.3 L1493.9,333.4 L1493.1,331.5 L1493.2,329.5 L1493.3,327.6 L1494.9,325.7 L1496.6,323.8 L1495.3,321.8 L1497.1,319.9 L1497.3,318.0 L1498.2,316.0 L1498.0,314.1 L1499.5,312.2 L1502.2,310.6 L1502.1,309.0 L1504.3,307.4 L1503.0,306.2 L1500.9,305.0 L1498.3,303.7 L1497.9,302.5 L1496.4,301.5 L1493.8,300.4 L1491.9,299.3 L1490.3,298.3 L1489.0,297.2 L1488.2,296.1 L1487.2,294.1 L1488.6,292.0 L1488.3,290.0 L1489.4,287.9 L1489.3,285.9 L1489.5,283.8 L1487.6,281.8 L1488.1,279.7 L1487.6,277.7 L1488.5,275.6 L1488.2,273.6 L1490.4,272.5 L1492.7,271.5 L1494.4,270.4 L1495.1,269.3 L1497.4,268.2 L1499.5,267.2 L1497.9,265.6 L1495.0,264.0 L1493.5,262.3 L1493.1,260.7 L1493.5,259.0 L1493.5,257.2 L1495.8,255.4 L1495.3,253.6 L1495.6,251.8 L1496.5,250.0 L1497.4,248.2 L1498.1,246.4 L1499.5,244.7 L1501.3,243.4 L1502.9,242.1 L1504.2,240.8 L1506.8,239.5 L1508.2,238.2 L1505.7,237.3 L1505.8,236.4 L1504.2,235.5 L1501.9,234.6 L1499.5,233.6 L1498.0,232.7 L1496.3,231.8 L1494.5,230.8 L1491.3,229.9 L1490.3,228.9 L1488.6,227.9 L1486.6,227.0 L1487.6,226.0 L1489.2,225.0 L1492.7,224.1 L1493.4,223.1 L1495.6,222.2 L1498.4,221.2 L1499.4,220.2 L1500.4,219.3 L1502.7,218.3 L1502.3,216.4 L1499.2,214.4 L1497.9,212.5 L1495.6,210.9 L1496.2,209.3 L1493.7,207.7 L1493.1,206.1 L1493.4,204.5 L1491.4,202.9 L1492.7,201.0 L1491.9,199.2 L1493.8,197.3 L1494.5,195.5 L1495.5,193.7 L1495.7,191.8 L1497.2,190.0 L1497.1,187.8 L1495.5,185.5 L1496.3,183.3 L1494.8,181.4 L1494.0,179.4 L1494.5,177.5 L1491.4,175.6 L1491.4,173.6 L1492.4,171.5 L1491.2,169.3 L1492.4,167.2 L1492.2,165.1 L1492.7,162.9 L1493.1,160.8 L1494.3,158.8 L1494.1,156.9 L1494.0,155.0 L1494.7,153.1 L1495.2,151.1 L1497.8,149.2 L1497.9,147.3 L1499.3,145.3 L1499.3,143.4 L1499.5,141.5 L1497.6,139.6 L1498.5,137.8 L1498.1,136.0 L1497.3,134.1 L1496.0,132.3 L1495.0,130.5 L1494.7,128.6 L1495.8,127.0 L1497.8,125.4 L1497.7,123.8 L1499.5,122.2 L1499.4,120.3 L1499.1,118.3 L1500.1,116.4 L1499.6,114.5 L1499.8,112.5 L1499.4,110.6 L1497.9,108.7 L1497.5,106.8 L1498.0,104.8 L1497.9,102.9 L1498.5,101.3 L1500.1,99.7 L1501.9,98.1 L1502.7,96.5 L1501.6,95.4 L1498.6,94.3 L1496.3,93.2 L1495.9,91.4 L1493.0,89.6 L1492.5,87.7 L1492.9,85.9 L1489.6,84.1 L1489.2,82.2 L1488.2,80.4 L1487.7,78.2 L1488.3,76.1 L1489.8,74.0 L1492.4,72.9 L1494.3,71.8 L1495.0,70.7 L1495.3,69.7 L1497.4,68.6 L1499.5,67.5 L1497.2,65.9 L1496.3,64.3 L1495.8,62.5 L1494.9,60.7 L1493.4,58.9 L1492.8,57.2 L1490.8,55.4 L1491.0,53.6 L1491.1,51.8 L1489.8,50.0 L1488.2,48.2 L1487.2,46.2 L1488.3,44.1 L1488.8,42.1 L1487.6,40.0 L1489.2,38.0 L1488.1,36.0 L1488.7,33.9 L1488.0,31.9 L1489.5,29.8 L1488.9,27.8 L1488.2,25.7 L1490.0,24.4 L1490.6,23.2 L1492.9,21.9 L1493.5,20.6 L1496.3,19.3 L1498.4,18.8 L1501.1,18.3 L1501.3,17.7 L1504.0,17.2 L1505.9,16.7 L1503.7,16.0 L1501.4,15.2 L1499.5,14.5 L1498.4,12.9 L1497.4,11.3 L1495.2,9.6 L1493.1,8.0 L1492.6,6.0 L1493.4,4.0 L1491.4,2.0 L1491.4,0.0 L1491.4,-20.0" fill="none" stroke="#2e2e2e" stroke-width="2" stroke-linejoin="round"/></svg>
</div></div>
</body></html>
